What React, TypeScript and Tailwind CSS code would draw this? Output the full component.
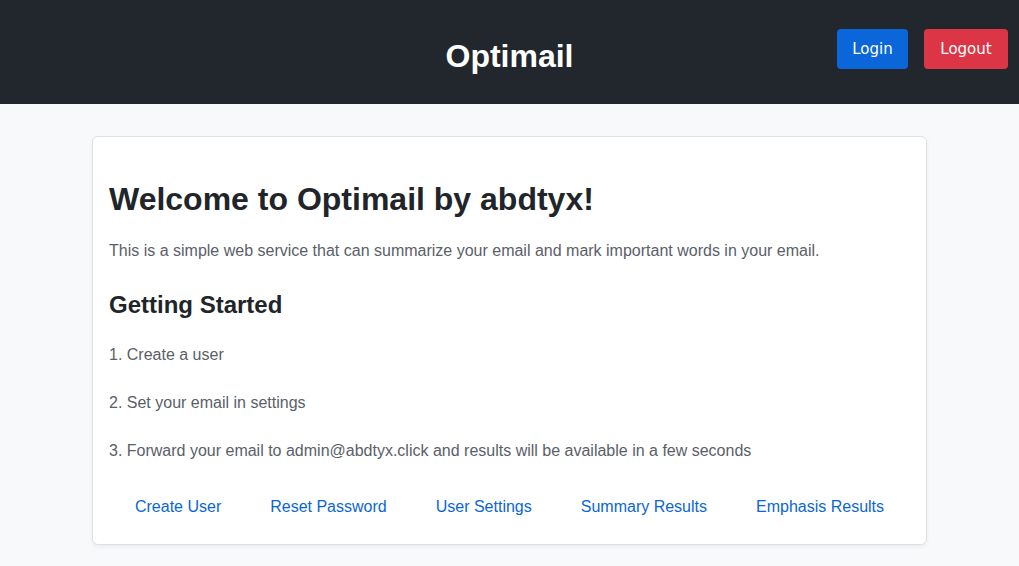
const links = ["Create User", "Reset Password", "User Settings", "Summary Results", "Emphasis Results"];

const steps = [
  "1. Create a user",
  "2. Set your email in settings",
  "3. Forward your email to admin@abdtyx.click and results will be available in a few seconds",
];

export default function App() {
  return (
    <div className="min-h-[566px] bg-[#f8f9fa] font-['Liberation_Sans',Arial,sans-serif]">
      {/* Header */}
      <header className="relative flex h-[104px] items-center justify-center bg-[#22262d]">
        <h1 className="mt-2 text-[32px] font-bold leading-none text-white">Optimail</h1>
        <div className="absolute right-[11px] top-[29px] flex gap-4 font-['DejaVu_Sans',sans-serif]">
          <button className="h-10 w-[71px] rounded-[4px] bg-[#0b66d9] pt-px text-[15px] text-white">Login</button>
          <button className="h-10 w-[84px] rounded-[4px] bg-[#dc3545] pt-px text-[15px] text-white">Logout</button>
        </div>
      </header>

      {/* Card */}
      <main className="px-[92px] pt-8">
        <div className="rounded-[6px] border border-[#dee2e6] bg-white px-4 pb-[25px] pt-[43px] shadow-[0_2px_4px_rgba(0,0,0,0.06)]">
          <h2 className="text-[32px] font-bold leading-[1.2] text-[#212529]">Welcome to Optimail by abdtyx!</h2>
          <p className="mt-[21px] text-[16px] leading-6 text-[#5a6068]">
            This is a simple web service that can summarize your email and mark important words in your email.
          </p>
          <h3 className="mt-[28px] text-[24px] font-bold leading-[1.2] text-[#212529]">Getting Started</h3>
          <div className="mt-[23px] flex flex-col gap-6">
            {steps.map((s) => (
              <p key={s} className="text-[16px] leading-6 text-[#5a6068]">{s}</p>
            ))}
          </div>
          <div className="mt-8 flex justify-center gap-[49px]">
            {links.map((l) => (
              <a key={l} href="#" className="text-[16px] leading-6 text-[#0a66d8]">{l}</a>
            ))}
          </div>
        </div>
      </main>
    </div>
  );
}
